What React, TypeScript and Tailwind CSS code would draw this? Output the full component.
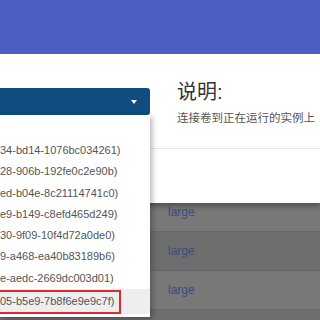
const instances = [
  '34-bd14-1076bc034261)',
  '28-906b-192fe0c2e90b)',
  'ed-b04e-8c21114741c0)',
  'e9-b149-c8efd465d249)',
  '30-9f09-10f4d72a0de0)',
  '9-a468-ea40b83189b6)',
  'e-aedc-2669dc003d01)',
];

const rows = ['large', 'large', 'large', ''];

export default function App() {
  return (
    <div className="relative w-[320px] h-[320px] overflow-hidden bg-[#707070] font-['Liberation_Sans','Noto_Sans_CJK_SC',sans-serif]">
      {/* table behind the backdrop */}
      <div className="pt-[193px]">
        {rows.map((r, i) => (
          <div
            key={i}
            className={`h-[39px] border-b border-[#676767] flex items-center pl-[168px] text-[12px] text-[#3d4d7b] ${
              i % 2 === 0 ? 'bg-[#787878]' : 'bg-[#6e6e6e]'
            }`}
          >
            {r}
          </div>
        ))}
      </div>

      {/* modal */}
      <div className="absolute inset-x-0 top-0 bg-white shadow-[0_3px_6px_rgba(0,0,0,0.35)]">
        <div className="h-[54px] bg-[#4a5fc1]" />
        <div className="flex h-[95px] border-b border-[#e6e6e6]">
          <div className="w-[150px] shrink-0 pt-[34px]">
            <div className="-ml-2 w-[158px] h-[27px] rounded-[3px] bg-[#0f4d80] flex items-center justify-end pr-[13px]">
              <div className="w-0 h-0 border-l-[3.5px] border-r-[3.5px] border-t-[4px] border-l-transparent border-r-transparent border-t-white" />
            </div>
          </div>
          <div className="pl-[27px] pt-[24px]">
            <div className="text-[20px] leading-[28px] text-[#333]">说明:</div>
            <div className="mt-[4px] text-[11.5px] leading-[16px] text-[#555] whitespace-nowrap">
              连接卷到正在运行的实例上
            </div>
          </div>
        </div>
        <div className="h-[54px]" />
      </div>

      {/* dropdown list */}
      <div className="absolute top-[115px] left-0 w-[150px] h-[202px] bg-white shadow-[2px_2px_6px_rgba(0,0,0,0.3)] pt-[25px] text-[11px] text-[#555]">
        {instances.map((t) => (
          <div key={t} className="h-[21.3px] leading-[21.3px] whitespace-nowrap">
            {t}
          </div>
        ))}
        <div className="h-[25px] bg-[#eeeeee] flex items-center">
          <span className="-ml-[2px] h-[24px] inline-flex items-center pr-[5px] border-2 border-[#e0282d] whitespace-nowrap">
            05-b5e9-7b8f6e9e9c7f)
          </span>
        </div>
      </div>
    </div>
  );
}
